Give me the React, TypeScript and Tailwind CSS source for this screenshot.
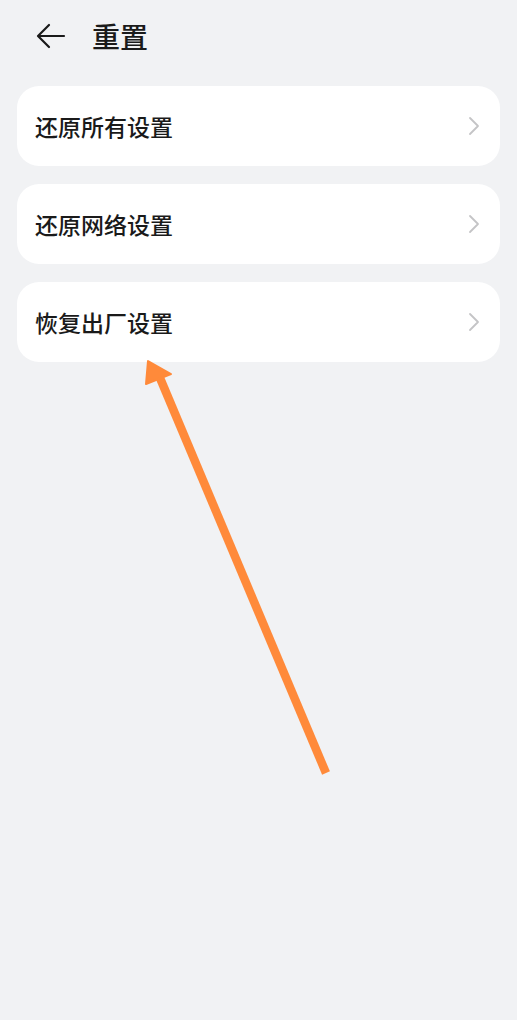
import React from 'react';

const items = ['还原所有设置', '还原网络设置', '恢复出厂设置'];

const ChevronRight = () => (
  <svg width="12" height="20" viewBox="0 0 12 20" fill="none">
    <path d="M2 2l8 8-8 8" stroke="#c4c4c6" strokeWidth="1.8" strokeLinecap="round" strokeLinejoin="round" />
  </svg>
);

const BackArrow = () => (
  <svg width="30" height="26" viewBox="0 0 30 26" fill="none">
    <path d="M28 13H3M13 2L2 13l11 11" stroke="#1a1a1a" strokeWidth="2.2" strokeLinecap="round" strokeLinejoin="round" />
  </svg>
);

export default function App() {
  return (
    <div
      className="relative w-[517px] h-[1020px] bg-[#f1f2f4] overflow-hidden"
      style={{ fontFamily: '"Noto Sans CJK SC", "Noto Sans", sans-serif' }}
    >
      {/* Header */}
      <div className="flex items-center h-[71px] pl-[36px]">
        <BackArrow />
        <h1 className="ml-[26px] text-[28px] font-medium text-[#1a1a1a] leading-none">重置</h1>
      </div>

      {/* List */}
      <div className="flex flex-col gap-[18px] px-[17px] pt-[15px]">
        {items.map((label) => (
          <div
            key={label}
            className="flex items-center justify-between h-[80px] bg-white rounded-[22px] pl-[18px] pr-[20px]"
          >
            <span className="text-[23px] font-medium text-[#1a1a1a] leading-none">{label}</span>
            <ChevronRight />
          </div>
        ))}
      </div>

      {/* Annotation arrow */}
      <svg className="absolute inset-0 pointer-events-none" width="517" height="1020" viewBox="0 0 517 1020">
        <line x1="326" y1="773" x2="160" y2="378" stroke="#ff8a3a" strokeWidth="8.5" />
        <polygon points="148,361 146,384 171,374" fill="#ff8a3a" stroke="#ff8a3a" strokeWidth="2" strokeLinejoin="round" />
      </svg>
    </div>
  );
}
